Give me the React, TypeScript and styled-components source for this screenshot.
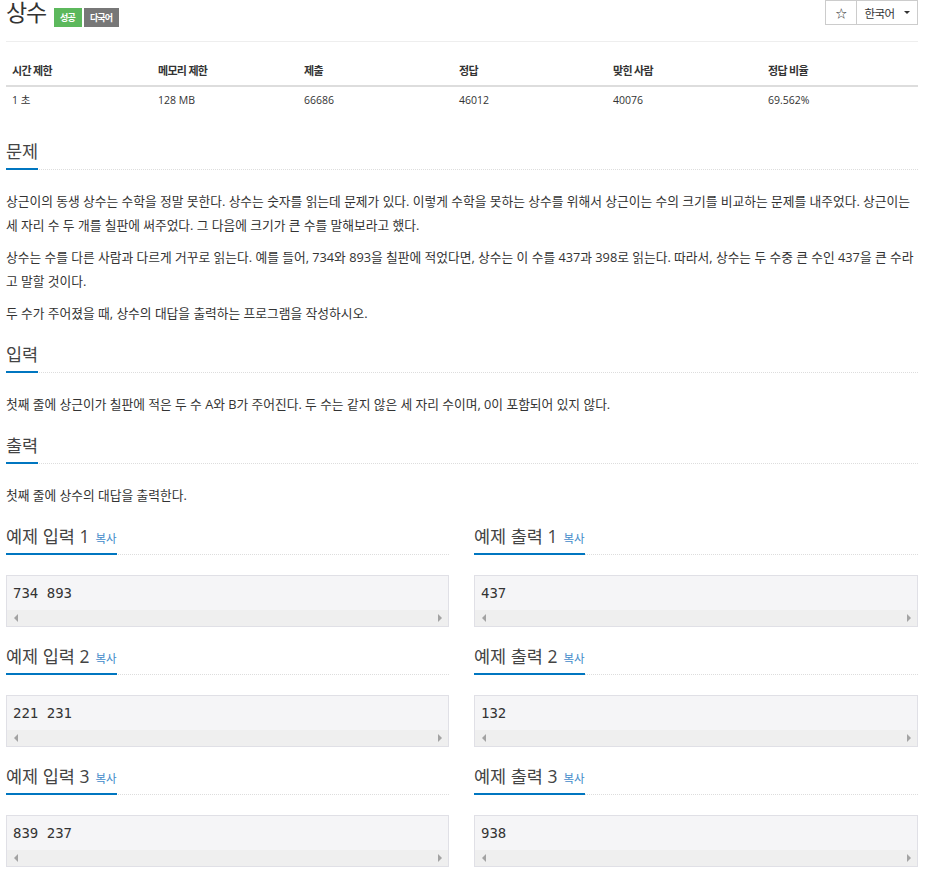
import * as React from 'react'
import styled, { createGlobalStyle } from 'styled-components'

const GlobalStyle = createGlobalStyle`
  body {
    margin: 0;
    background: #fff;
    color: #333;
    font-family: "Open Sans", "Noto Sans CJK KR", sans-serif;
  }
`

const Page = styled.div`
  width: 912px;
  margin-left: 6px;
`

const TitleRow = styled.div`
  display: flex;
  align-items: flex-start;
  justify-content: space-between;
  height: 24px;
`

const TitleGroup = styled.div`
  display: flex;
  align-items: baseline;
`

const Title = styled.h1`
  margin: 0 8px 0 0;
  font-size: 23px;
  line-height: 24px;
  font-weight: 400;
  letter-spacing: -1.2px;
  color: #333;
`

const Label = styled.span<{ $tone: 'success' | 'muted' }>`
  display: inline-block;
  margin-right: 2px;
  padding: 4px 7px 4px 6px;
  font-size: 9px;
  line-height: 11px;
  font-weight: 700;
  letter-spacing: -0.8px;
  color: #fff;
  background: ${(p) => (p.$tone === 'success' ? '#5cb85c' : '#777')};
`

const BtnGroup = styled.div`
  display: flex;
`

const Btn = styled.button<{ $w: number }>`
  display: flex;
  align-items: center;
  justify-content: center;
  gap: 9px;
  width: ${(p) => p.$w}px;
  height: 25px;
  margin-left: -1px;
  padding: 0;
  border: 1px solid #ccc;
  background: #fff;
  color: #333;
  font-family: inherit;
  font-size: 11.5px;
  letter-spacing: -0.5px;
`

const Caret = styled.span`
  width: 0;
  height: 0;
  border-top: 3px solid #333;
  border-left: 3px solid transparent;
  border-right: 3px solid transparent;
`

const Divider = styled.hr`
  margin: 17px 0 0;
  border: 0;
  border-top: 1px solid #eee;
`

const Stats = styled.table`
  width: 100%;
  margin: 15px 0 26px;
  border-collapse: collapse;
  table-layout: fixed;
  font-size: 10.5px;
`

const Col = styled.col<{ $w: number }>`
  width: ${(p) => p.$w}px;
`

const Th = styled.th`
  padding: 6px;
  line-height: 16px;
  text-align: left;
  font-size: 11px;
  font-weight: 700;
  letter-spacing: -0.7px;
  border-bottom: 2px solid #ddd;
`

const Td = styled.td`
  padding: 5px 6px;
  line-height: 16px;
`

const Section = styled.section`
  margin-bottom: 17px;
`

const Headline = styled.div<{ $gap: number }>`
  display: flex;
  margin-bottom: ${(p) => p.$gap}px;
  border-bottom: 1px dotted #ddd;
`

const HeadTitle = styled.h2`
  margin: 0 0 -1px;
  padding-bottom: 5px;
  border-bottom: 2px solid #0076c0;
  font-size: 17.5px;
  line-height: 24px;
  font-weight: 400;
  color: #444;
`

const CopyLink = styled.span`
  margin-left: 6px;
  font-size: 11.5px;
  line-height: 1;
  color: #428bca;
`

const Para = styled.p`
  margin: 0 0 8px;
  font-size: 12.75px;
  line-height: 24px;
`

const SampleGrid = styled.div`
  display: grid;
  grid-template-columns: 443px 444px;
  column-gap: 25px;
  margin-top: 4px;
`

const Sample = styled.div`
  margin-bottom: 17px;
`

const PreBox = styled.div`
  border: 1px solid #e0e0e6;
  background: #f5f5f7;
`

const Code = styled.pre`
  margin: 0;
  padding: 7px 6px 7px;
  font-family: "DejaVu Sans Mono", monospace;
  font-size: 14px;
  line-height: 20px;
  color: #333;
`

const ScrollTrack = styled.div`
  display: flex;
  align-items: center;
  justify-content: space-between;
  height: 16px;
  padding: 0 6px 0 7px;
  background: #efefef;
`

const Arrow = styled.span<{ $dir: 'left' | 'right' }>`
  width: 0;
  height: 0;
  border-top: 4px solid transparent;
  border-bottom: 4px solid transparent;
  ${(p) => (p.$dir === 'left' ? 'border-right' : 'border-left')}: 4px solid #a3a3a3;
`

const stats = [
  { head: '시간 제한', value: '1 초', w: 146 },
  { head: '메모리 제한', value: '128 MB', w: 146 },
  { head: '제출', value: '66686', w: 155 },
  { head: '정답', value: '46012', w: 154 },
  { head: '맞힌 사람', value: '40076', w: 155 },
  { head: '정답 비율', value: '69.562%', w: 156 },
]

const samples = [
  { n: 1, input: '734 893', output: '437' },
  { n: 2, input: '221 231', output: '132' },
  { n: 3, input: '839 237', output: '938' },
]

const SampleBlock = (props: { title: string; text: string }) => (
  <Sample>
    <Headline $gap={20}>
      <HeadTitle>
        {props.title}
        <CopyLink>복사</CopyLink>
      </HeadTitle>
    </Headline>
    <PreBox>
      <Code>{props.text}</Code>
      <ScrollTrack>
        <Arrow $dir="left" />
        <Arrow $dir="right" />
      </ScrollTrack>
    </PreBox>
  </Sample>
)

const TextSection = (props: { title: string; children: React.ReactNode }) => (
  <Section>
    <Headline $gap={19}>
      <HeadTitle>{props.title}</HeadTitle>
    </Headline>
    {props.children}
  </Section>
)

export default function App() {
  return (
    <Page>
      <GlobalStyle />
      <TitleRow>
        <TitleGroup>
          <Title>상수</Title>
          <Label $tone="success">성공</Label>
          <Label $tone="muted">다국어</Label>
        </TitleGroup>
        <BtnGroup>
          <Btn $w={32}>☆</Btn>
          <Btn $w={62}>
            한국어
            <Caret />
          </Btn>
        </BtnGroup>
      </TitleRow>
      <Divider />

      <Stats>
        <colgroup>
          {stats.map((s) => (
            <Col key={s.head} $w={s.w} />
          ))}
        </colgroup>
        <thead>
          <tr>
            {stats.map((s) => (
              <Th key={s.head}>{s.head}</Th>
            ))}
          </tr>
        </thead>
        <tbody>
          <tr>
            {stats.map((s) => (
              <Td key={s.head}>{s.value}</Td>
            ))}
          </tr>
        </tbody>
      </Stats>

      <TextSection title="문제">
        <Para>
          상근이의 동생 상수는 수학을 정말 못한다. 상수는 숫자를 읽는데 문제가 있다. 이렇게 수학을 못하는 상수를 위해서
          상근이는 수의 크기를 비교하는 문제를 내주었다. 상근이는 세 자리 수 두 개를 칠판에 써주었다. 그 다음에 크기가 큰
          수를 말해보라고 했다.
        </Para>
        <Para>
          상수는 수를 다른 사람과 다르게 거꾸로 읽는다. 예를 들어, 734와 893을 칠판에 적었다면, 상수는 이 수를 437과 398로
          읽는다. 따라서, 상수는 두 수중 큰 수인 437을 큰 수라고 말할 것이다.
        </Para>
        <Para>두 수가 주어졌을 때, 상수의 대답을 출력하는 프로그램을 작성하시오.</Para>
      </TextSection>

      <TextSection title="입력">
        <Para>
          첫째 줄에 상근이가 칠판에 적은 두 수 A와 B가 주어진다. 두 수는 같지 않은 세 자리 수이며, 0이 포함되어 있지 않다.
        </Para>
      </TextSection>

      <TextSection title="출력">
        <Para>첫째 줄에 상수의 대답을 출력한다.</Para>
      </TextSection>

      <SampleGrid>
        {samples.map((s) => (
          <React.Fragment key={s.n}>
            <SampleBlock title={`예제 입력 ${s.n}`} text={s.input} />
            <SampleBlock title={`예제 출력 ${s.n}`} text={s.output} />
          </React.Fragment>
        ))}
      </SampleGrid>
    </Page>
  )
}
